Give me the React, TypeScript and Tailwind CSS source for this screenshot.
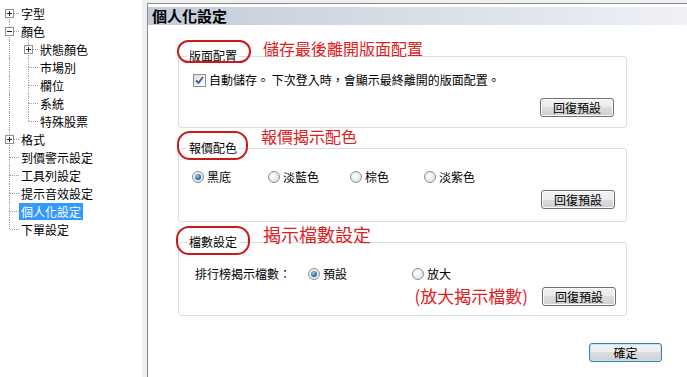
import type { ReactNode } from "react";

type Node = { box?: "+" | "-"; first?: boolean; last?: boolean };
type Cell = "pass" | Node;
type Row = { label: string; cells: Cell[]; selected?: boolean };

const rows: Row[] = [
  { label: "字型", cells: [{ box: "+", first: true }] },
  { label: "顏色", cells: [{ box: "-" }] },
  { label: "狀態顏色", cells: ["pass", { box: "+" }] },
  { label: "市場別", cells: ["pass", {}] },
  { label: "欄位", cells: ["pass", {}] },
  { label: "系統", cells: ["pass", {}] },
  { label: "特殊股票", cells: ["pass", { last: true }] },
  { label: "格式", cells: [{ box: "+" }] },
  { label: "到價警示設定", cells: [{}] },
  { label: "工具列設定", cells: [{}] },
  { label: "提示音效設定", cells: [{}] },
  { label: "個人化設定", cells: [{}], selected: true },
  { label: "下單設定", cells: [{ last: true }] },
];

function TreeCell({ cell }: { cell: Cell }) {
  if (cell === "pass") {
    return (
      <div className="relative w-[19px] h-[18px] shrink-0">
        <div className="absolute left-[9px] top-0 h-[18px] border-l border-dotted border-[#a0a0a0]" />
      </div>
    );
  }
  return (
    <div className="relative w-[19px] h-[18px] shrink-0">
      {!cell.first && (
        <div className="absolute left-[9px] top-0 h-[9px] border-l border-dotted border-[#a0a0a0]" />
      )}
      {!cell.last && (
        <div className="absolute left-[9px] top-[9px] h-[9px] border-l border-dotted border-[#a0a0a0]" />
      )}
      <div className="absolute left-[10px] top-[9px] w-[9px] border-t border-dotted border-[#a0a0a0]" />
      {cell.box && (
        <div className="absolute left-[5px] top-[5px] w-[9px] h-[9px] border border-[#919191] bg-white">
          <div className="absolute left-[1px] top-[3px] w-[5px] h-px bg-[#222]" />
          {cell.box === "+" && <div className="absolute left-[3px] top-[1px] w-px h-[5px] bg-[#222]" />}
        </div>
      )}
    </div>
  );
}

function Tree() {
  return (
    <div className="w-[142px] shrink-0 bg-white pt-[4px]">
      {rows.map((r) => (
        <div key={r.label} className="flex h-[18px] items-center">
          {r.cells.map((c, i) => (
            <TreeCell key={i} cell={c} />
          ))}
          <span
            className={
              r.selected
                ? "ml-0 px-[2px] h-[17px] leading-[17px] bg-[#3399ff] text-white text-[12px]"
                : "ml-0 px-[2px] h-[17px] leading-[17px] text-black text-[12px]"
            }
          >
            {r.label}
          </span>
        </div>
      ))}
    </div>
  );
}

function Button({ children, focus }: { children: ReactNode; focus?: boolean }) {
  return (
    <button
      className={
        focus
          ? "h-[19px] w-[73px] rounded-[3px] border border-[#3c7fb1] bg-[linear-gradient(#f2f2f2,#ebebeb_50%,#dddddd_50%,#cfcfcf)] shadow-[inset_0_0_0_1px_#bfe4f7] text-[12px] leading-[17px] text-black"
          : "h-[19px] w-[74px] rounded-[3px] border border-[#707070] bg-[linear-gradient(#f2f2f2,#ebebeb_50%,#dddddd_50%,#cfcfcf)] shadow-[inset_0_0_0_1px_#fafafa] text-[12px] leading-[17px] text-black"
      }
    >
      {children}
    </button>
  );
}

function Radio({ checked, label }: { checked?: boolean; label: string }) {
  return (
    <span className="flex items-center gap-[3px]">
      <span className="flex items-center justify-center w-[12px] h-[12px] rounded-full border border-[#8e8f8f] bg-[radial-gradient(circle_at_40%_40%,#ffffff,#d8d8d8)]">
        {checked && (
          <span className="w-[6px] h-[6px] rounded-full bg-[radial-gradient(circle_at_40%_35%,#8fd0f5,#1f5d9c_70%)]" />
        )}
      </span>
      <span className="text-[12px] leading-[16px]">{label}</span>
    </span>
  );
}

function Checkbox() {
  return (
    <span className="w-[13px] h-[13px] border border-[#8e8f8f] bg-[linear-gradient(135deg,#dcdcdc,#ffffff)] flex items-center justify-center">
      <svg width="11" height="11" viewBox="0 0 11 11">
        <path d="M2 5.5 L4.5 8 L9 2" fill="none" stroke="#3d5a92" strokeWidth="1.8" />
      </svg>
    </span>
  );
}

function Group({
  title,
  children,
  note,
}: {
  title: string;
  children: ReactNode;
  note: ReactNode;
}) {
  return (
    <fieldset className="w-[449px] rounded-[3px] border border-[#d5dfe5] p-0 m-0">
      <legend className="ml-[8px] px-[2px] text-[12px] leading-[16px]">
        <span className="relative block">
          {title}
          {note}
        </span>
      </legend>
      {children}
    </fieldset>
  );
}

export default function App() {
  return (
    <div className="flex w-[687px] h-[377px] overflow-hidden bg-white text-black font-['Noto_Sans_CJK_TC','Microsoft_JhengHei',sans-serif]">
      <Tree />
      <div className="w-[5px] shrink-0 bg-[#f0f0f0]" />
      <div className="flex flex-1 flex-col">
        <div className="h-[3px] bg-[#f0f0f0]" />
        <div className="flex-1 border-t border-l border-[#8a8a8a] bg-white pt-[3px]">
          <div className="h-[18px] bg-linear-to-r from-[#c3ccd8] to-[#eff1f4] pl-[4px] text-[15px] font-bold leading-[18px]">
            個人化設定
          </div>

          <div className="ml-[30px] mt-[23px] flex flex-col gap-[12px]">
            <Group
              title="版面配置"
              note={
                <>
                  <span className="absolute -left-[12px] -top-[8px] w-[74px] h-[23px] rounded-[12px] border-2 border-[#cc1a1a]" />
                  <span className="absolute left-[74px] -top-[10px] whitespace-nowrap text-[16px] leading-[20px] text-[#e0201e]">
                    儲存最後離開版面配置
                  </span>
                </>
              }
            >
              <div className="mt-[8px] flex h-[16px] items-center gap-[3px] pl-[14px]">
                <Checkbox />
                <span className="text-[12px] leading-[16px]">
                  自動儲存。 下次登入時，會顯示最終離開的版面配置。
                </span>
              </div>
              <div className="mt-[10px] flex justify-end pr-[12px] pb-[10px]">
                <Button>回復預設</Button>
              </div>
            </Group>

            <Group
              title="報價配色"
              note={
                <>
                  <span className="absolute -left-[12px] -top-[9px] w-[71px] h-[29px] rounded-[13px] border-2 border-[#cc1a1a]" />
                  <span className="absolute left-[72px] -top-[14px] whitespace-nowrap text-[16px] leading-[20px] text-[#e0201e]">
                    報價揭示配色
                  </span>
                </>
              }
            >
              <div className="mt-[13px] flex h-[16px] items-center pl-[13px]">
                <span className="w-[76px]">
                  <Radio checked label="黑底" />
                </span>
                <span className="w-[82px]">
                  <Radio label="淡藍色" />
                </span>
                <span className="w-[74px]">
                  <Radio label="棕色" />
                </span>
                <Radio label="淡紫色" />
              </div>
              <div className="mt-[5px] flex justify-end pr-[11px] pb-[12px]">
                <Button>回復預設</Button>
              </div>
            </Group>

            <Group
              title="檔數設定"
              note={
                <>
                  <span className="absolute -left-[13px] -top-[8px] w-[74px] h-[29px] rounded-[13px] border-2 border-[#cc1a1a]" />
                  <span className="absolute left-[74px] -top-[11px] whitespace-nowrap text-[18px] leading-[22px] text-[#e0201e]">
                    揭示檔數設定
                  </span>
                </>
              }
            >
              <div className="mt-[16px] flex h-[16px] items-center pl-[16px]">
                <span className="w-[113px] text-[12px] leading-[16px]">排行榜揭示檔數：</span>
                <span className="w-[104px]">
                  <Radio checked label="預設" />
                </span>
                <Radio label="放大" />
              </div>
              <div className="mt-[4px] flex items-center justify-end gap-[14px] pr-[10px] pb-[9px]">
                <span className="text-[17px] leading-[20px] text-[#e0201e]">(放大揭示檔數)</span>
                <Button>回復預設</Button>
              </div>
            </Group>
          </div>

          <div className="mt-[27px] flex justify-end pr-[25px]">
            <Button focus>確定</Button>
          </div>
        </div>
      </div>
    </div>
  );
}
